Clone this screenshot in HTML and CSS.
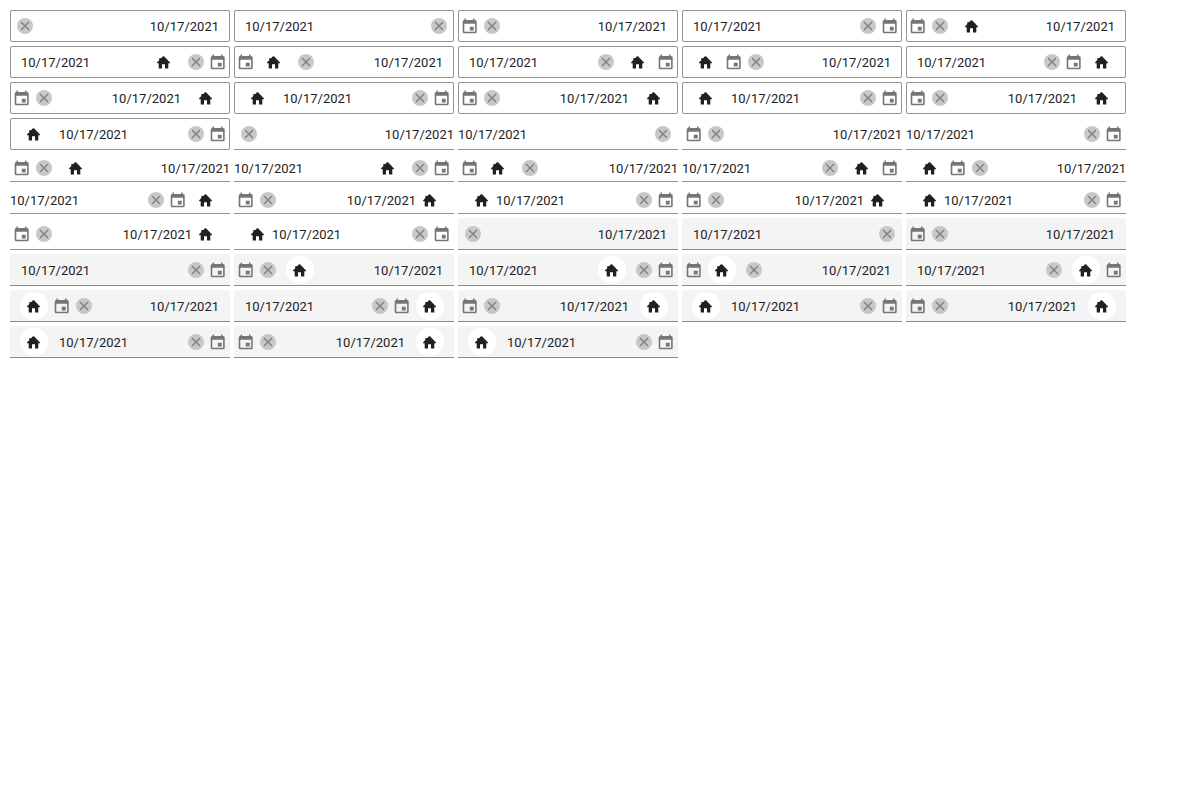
FILE: index.html
```html
<!DOCTYPE html>
<html lang="en">
<head>
<meta charset="utf-8">
<title>Date fields</title>
<link rel="stylesheet" href="styles.css">
</head>
<body>
<svg class="sprite" aria-hidden="true">
  <symbol id="home" viewBox="0 0 16 16"><path d="M7 2.300 H8 L14 8.500 V9.200 H12.300 V14.500 H9 V10.300 H6 V14.500 H2.700 V9.200 H1 V8.500 L3.300 6.100 V4 H4.800 V4.600 Z"/></symbol>
  <symbol id="calendar" viewBox="0 0 16 16"><path fill-rule="evenodd" d="M2.500 .6 H4 V2 H11 V.6 H12.500 V2 H13.200 A1.500 1.500 0 0 1 14.700 3.500 V13.700 A1.500 1.500 0 0 1 13.200 15.200 H2.200 A1.500 1.500 0 0 1 .7 13.700 V3.500 A1.500 1.500 0 0 1 2.200 2 H2.500 Z M2.300 5.800 V13.700 H13.100 V5.800 Z M7.800 8.800 H11.700 V12.600 H7.800 Z"/></symbol>
  <symbol id="clear" viewBox="0 0 16 16"><path d="M4 4 L12 12 M12 4 L4 12" fill="none" stroke="currentColor" stroke-width="1.2"/></symbol>
</svg>
<main class="fields"></main>
<script src="fields.js"></script>
</body>
</html>
```
FILE: styles.css
```css
* {
  box-sizing: border-box;
}

body {
  margin: 0;
  padding: 10px;
  background: #fff;
  color: #212121;
  font: 13px/20px Roboto, "Liberation Sans", sans-serif;
}

.sprite {
  display: none;
}

.fields {
  display: grid;
  grid-template-columns: repeat(auto-fill, 220px);
  gap: 4px;
}

.field {
  display: flex;
  align-items: center;
  min-height: 32px;
}

.outlined {
  border-radius: 2px;
  box-shadow: inset 0 0 0 1px #949494;
}

.underlined {
  min-height: 28px;
  box-shadow: inset 0 -1px #949494;
}

.filled {
  border-radius: 2px 2px 0 0;
  background: #f4f4f4;
  box-shadow: inset 0 -1px #8c8c8c;
}

.value {
  flex: 1;
  min-width: 0;
  margin: 0;
  padding: 2px 11px 0;
  border: 0;
  outline: 0;
  background: none;
  color: inherit;
  font: inherit;
}

.underlined .value {
  padding: 2px 0 0;
}

.value-end {
  text-align: right;
}

.button {
  flex: none;
  width: 16px;
  height: 16px;
  margin: 0 3px;
  padding: 0;
  border: 0;
  border-radius: 50%;
  background: none;
  color: #757575;
}

.button svg {
  display: block;
  width: 16px;
  height: 16px;
  margin: 0 auto;
  fill: currentColor;
}

.clear {
  background: #c8c8c8;
  color: #7c7c7c;
}

.calendar {
  border-radius: 0;
}

.home {
  width: 28px;
  height: 28px;
  margin: 0;
  color: #212121;
}

.filled .home {
  background: #fff;
}

.calendar:first-child {
  margin-left: 4px;
}

.calendar:last-child {
  margin-right: 4px;
}

.clear:first-child {
  margin-left: 7px;
}

.clear:last-child {
  margin-right: 7px;
}

.home:first-child {
  margin-left: 10px;
}

.home:last-child {
  margin-right: 10px;
}

.calendar + .home {
  margin-left: 3px;
}

.home + .calendar {
  margin-left: 6px;
}

.clear + .home {
  margin-left: 7px;
}

.home + .clear {
  margin-left: 10px;
}
```
FILE: fields.js
```js
// Each layout lists the parts in order: C calendar, X clear, H home,
// "<" a start-aligned value, ">" an end-aligned value.
const layouts = [
  'X>', '<X', 'CX>', '<XC',
  'CXH>', '<HXC', 'CHX>', '<XHC', 'HCX>', '<XCH',
  'CX>H', 'H<XC', 'CX>H', 'H<XC', 'CX>H', 'H<XC'
];
const buttons = {
  C: ['calendar', 'Open calendar'],
  X: ['clear', 'Clear'],
  H: ['home', 'Home']
};

function part(key) {
  if (key === '<' || key === '>') {
    const align = key === '>' ? ' value-end' : '';
    return `<input class="value${align}" type="text" value="10/17/2021" aria-label="Date">`;
  }
  const [name, label] = buttons[key];
  return `<button class="button ${name}" type="button" aria-label="${label}"><svg aria-hidden="true"><use href="#${name}"/></svg></button>`;
}

document.querySelector('.fields').innerHTML = ['outlined', 'underlined', 'filled']
  .flatMap(style => layouts.map(layout =>
    `<div class="field ${style}">${[...layout].map(part).join('')}</div>`))
  .join('');
```
